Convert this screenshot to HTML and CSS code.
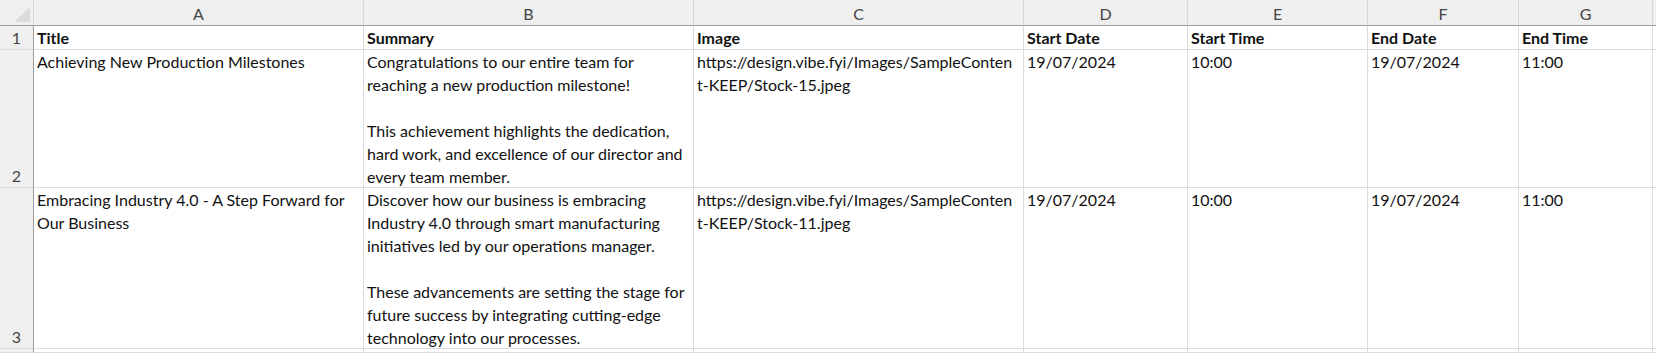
FILE: index.html
```html
<!DOCTYPE html>
<html lang="en">

<head>
    <meta charset="UTF-8">
    <meta name="viewport" content="width=device-width, initial-scale=1.0">
    <title>News Import Sheet</title>
    <link rel="stylesheet" href="styles.css">
</head>

<body>
    <div class="sheet">
        <!-- column headings -->
        <div class="corner">
            <svg width="16" height="15" viewBox="0 0 16 15"><polygon points="16,0 16,15 0,15" fill="#dcdcdc"/></svg>
        </div>
        <div class="col-head">A</div>
        <div class="col-head">B</div>
        <div class="col-head">C</div>
        <div class="col-head">D</div>
        <div class="col-head">E</div>
        <div class="col-head">F</div>
        <div class="col-head">G</div>
        <div class="col-head"></div>

        <!-- row 1 -->
        <div class="row-head">1</div>
        <div class="cell bold">Title</div>
        <div class="cell bold">Summary</div>
        <div class="cell bold">Image</div>
        <div class="cell bold">Start Date</div>
        <div class="cell bold">Start Time</div>
        <div class="cell bold">End Date</div>
        <div class="cell bold">End Time</div>
        <div class="cell"></div>

        <!-- row 2 -->
        <div class="row-head">2</div>
        <div class="cell">Achieving New Production Milestones</div>
        <div class="cell">Congratulations to our entire team for<br>reaching a new production milestone!<br><br>This achievement highlights the dedication,<br>hard work, and excellence of our director and<br>every team member.</div>
        <div class="cell">https://design.vibe.fyi/Images/SampleConten<br>t-KEEP/Stock-15.jpeg</div>
        <div class="cell">19/07/2024</div>
        <div class="cell">10:00</div>
        <div class="cell">19/07/2024</div>
        <div class="cell">11:00</div>
        <div class="cell"></div>

        <!-- row 3 -->
        <div class="row-head">3</div>
        <div class="cell">Embracing Industry 4.0 - A Step Forward for<br>Our Business</div>
        <div class="cell">Discover how our business is embracing<br>Industry 4.0 through smart manufacturing<br>initiatives led by our operations manager.<br><br>These advancements are setting the stage for<br>future success by integrating cutting-edge<br>technology into our processes.</div>
        <div class="cell">https://design.vibe.fyi/Images/SampleConten<br>t-KEEP/Stock-11.jpeg</div>
        <div class="cell">19/07/2024</div>
        <div class="cell">10:00</div>
        <div class="cell">19/07/2024</div>
        <div class="cell">11:00</div>
        <div class="cell"></div>

        <!-- row 4 (cut off) -->
        <div class="row-head"></div>
        <div class="cell"></div>
        <div class="cell"></div>
        <div class="cell"></div>
        <div class="cell"></div>
        <div class="cell"></div>
        <div class="cell"></div>
        <div class="cell"></div>
        <div class="cell"></div>
    </div>
</body>

</html>
```

FILE: styles.css
```css
body {
    margin: 0;
    font-family: Lato, 'Noto Sans', sans-serif;
    background: #fff;
    color: #000;
    height: 100vh;
    overflow: hidden;
}

.sheet {
    display: grid;
    grid-template-columns: 34px 330px 330px 330px 164px 180px 151px 134px 1fr;
    grid-template-rows: 26px 24px 138px 161px 1fr;
    height: 100%;
}

.sheet > div {
    box-sizing: border-box;
    overflow: hidden;
    white-space: nowrap;
}

.corner {
    background: #efefef;
    border-right: 1px solid #d6d6d6;
    border-bottom: 1px solid #9e9e9e;
    display: flex;
    align-items: flex-end;
    justify-content: flex-end;
    padding: 0 3px 3px 0;
}

.col-head {
    background: #efefef;
    border-right: 1px solid #d6d6d6;
    border-bottom: 1px solid #9e9e9e;
    color: #444;
    font-size: 16px;
    text-align: center;
    line-height: 25px;
    padding-top: 1px;
}

.row-head {
    background: #efefef;
    border-right: 1px solid #9e9e9e;
    border-bottom: 1px solid #dcdcdc;
    color: #444;
    font-size: 16px;
    line-height: 23px;
    display: flex;
    align-items: flex-end;
    justify-content: center;
}

.cell {
    border-right: 1px solid #dcdcdc;
    border-bottom: 1px solid #dcdcdc;
    font-size: 16px;
    line-height: 23px;
    padding: 0 3px;
    color: #111;
}

.bold {
    font-weight: 700;
}
```
